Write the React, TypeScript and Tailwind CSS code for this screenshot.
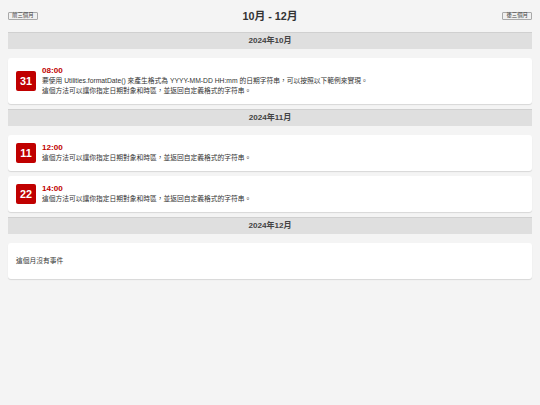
import React from 'react';

type Ev = { day: string; time: string; lines: string[] };
type Month = { label: string; events: Ev[] };

const DESC = '這個方法可以讓你指定日期對象和時區，並返回自定義格式的字符串。';

const months: Month[] = [
  {
    label: '2024年10月',
    events: [
      {
        day: '31',
        time: '08:00',
        lines: ['要使用 Utilities.formatDate() 來產生格式為 YYYY-MM-DD HH:mm 的日期字符串，可以按照以下範例來實現。', DESC],
      },
    ],
  },
  {
    label: '2024年11月',
    events: [
      { day: '11', time: '12:00', lines: [DESC] },
      { day: '22', time: '14:00', lines: [DESC] },
    ],
  },
  { label: '2024年12月', events: [] },
];

const font = { fontFamily: '"Liberation Sans", "Noto Sans CJK TC", sans-serif' };

function NavButton({ label }: { label: string }) {
  return (
    <button className="h-[8px] px-[3px] flex items-center border border-[#a9a9a9] bg-[#f0f0f0] rounded-[1px] text-[5.4px] leading-none text-[#444]">
      {label}
    </button>
  );
}

function EventCard({ ev }: { ev: Ev }) {
  return (
    <div className="flex items-center gap-[6px] p-[8px] mb-[5px] bg-white rounded-[3px] shadow-[0_1px_1px_rgba(0,0,0,0.12)]">
      <div className="w-[20px] h-[20px] shrink-0 flex items-center justify-center bg-[#c00000] rounded-[2px] text-white text-[10.8px] font-bold leading-none">
        {ev.day}
      </div>
      <div className="min-w-0">
        <div className="text-[8.1px] leading-[10px] font-bold text-[#c00000]">{ev.time}</div>
        {ev.lines.map((l, i) => (
          <div key={i} className="text-[6.75px] leading-[10px] text-[#333]">
            {l}
          </div>
        ))}
      </div>
    </div>
  );
}

export default function App() {
  return (
    <div className="w-[540px] h-[405px] bg-[#f4f4f4] p-[8px] overflow-hidden" style={font}>
      <div className="h-[16px] mb-[8px] flex items-center justify-between">
        <NavButton label="前三個月" />
        <div className="text-[10.8px] font-bold text-[#333]">10月 - 12月</div>
        <NavButton label="後三個月" />
      </div>

      {months.map((m) => (
        <div key={m.label}>
          <div className="h-[17px] mb-[9px] flex items-center justify-center bg-[#dfdfdf] border-t border-[#d0d0d0] text-[8.1px] font-bold text-[#444]">
            {m.label}
          </div>
          {m.events.length === 0 ? (
            <div className="h-[36px] px-[8px] flex items-center mb-[5px] bg-white rounded-[3px] shadow-[0_1px_1px_rgba(0,0,0,0.12)] text-[6.75px] text-[#333]">
              這個月沒有事件
            </div>
          ) : (
            m.events.map((ev) => <EventCard key={ev.day} ev={ev} />)
          )}
        </div>
      ))}
    </div>
  );
}
